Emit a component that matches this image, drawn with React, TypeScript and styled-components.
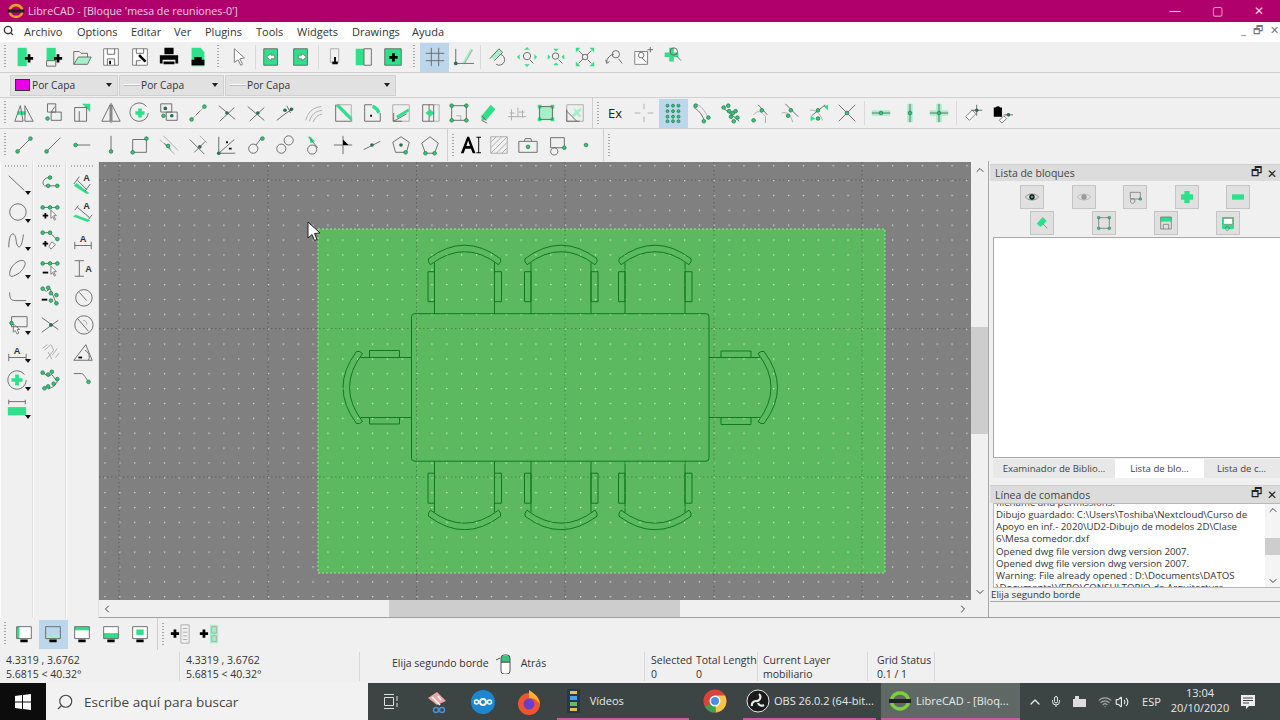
import React from "react";
import styled, { createGlobalStyle } from "styled-components";
import { ChevronUp, ChevronDown, ChevronLeft, ChevronRight, Mic, Wifi, Volume2, Search } from "lucide-react";

const UI = `"Open Sans", "Noto Sans", sans-serif`;
const NODE = "#37c27a";
const GREEN = "#2fe08a";

const Global = createGlobalStyle`
  html, body { margin: 0; padding: 0; background: #f0f0f0; overflow: hidden; }
  * { box-sizing: border-box; }
`;

// small description of a toolbar icon: b = white backing, s = stroke, l = light stroke, g = green fill, h = pale green, k = black fill, n = nodes
interface Glyph {
  b?: string;
  s?: string;
  l?: string;
  g?: string;
  h?: string;
  k?: string;
  w?: string;
  a?: string;
  n?: number[][];
  r?: number;
  dn?: number[][];
  text?: string;
  tx?: number;
  ty?: number;
}

const Icon: React.FC<{ glyph: Glyph; size?: number }> = ({ glyph, size = 22 }) => (
  <svg width={size} height={size} viewBox="0 0 24 24" fill="none">
    {glyph.b && <path d={glyph.b} fill="#fff" />}
    {glyph.h && <path d={glyph.h} fill="#a4f0c8" />}
    {glyph.g && <path d={glyph.g} fill={GREEN} />}
    {glyph.w && <path d={glyph.w} fill="#fff" stroke="#777" strokeWidth="1" />}
    {glyph.a && <path d={glyph.a} fill="#999" />}
    {glyph.l && <path d={glyph.l} stroke="#aaa" strokeWidth="1" />}
    {glyph.s && <path d={glyph.s} stroke="#666" strokeWidth="1" />}
    {glyph.k && <path d={glyph.k} fill="#000" />}
    {glyph.n?.map(([x, y], i) => (
      <circle key={i} cx={x} cy={y} r={glyph.r ?? 2} fill={NODE} stroke="#1f7d4c" strokeWidth="0.8" />
    ))}
    {glyph.dn?.map(([x, y], i) => (
      <circle key={i} cx={x} cy={y} r="2" fill="#2c6e4c" />
    ))}
    {glyph.text && (
      <text
        x={glyph.tx ?? 12}
        y={glyph.ty ?? 12}
        fontSize="10"
        fontWeight="700"
        textAnchor="middle"
        fill="#333"
        fontFamily="Liberation Sans, sans-serif"
      >
        {glyph.text}
      </text>
    )}
  </svg>
);

const PLUS = "M13 12h3V9h3v3h3v3h-3v3h-3v-3h-3z";
const DOC = "M5 2h10v20H5z";
const EYE = "M2 12c4-6 16-6 20 0c-4 6-16 6-20 0z";
const SCREEN = "M4 4h16v13H4z";
const STAND = "M8 18h8v3H8z";

const fileTools: Glyph[] = [
  { g: DOC, k: PLUS },
  { g: "M5 2h10v14H5z", s: "M5 16h10v6H5z", k: PLUS },
  { h: "M3 20l5-8h14l-4 8z", s: "M3 20V6h6l2 2h7v4 M3 20l5-8h14l-4 8z" },
  { w: "M4 3h16v18H4z", s: "M8 3v6h8V3 M8 21v-7h8v7", k: "M10 16h2v4h-2z" },
  { w: "M4 3h16v18H4z", s: "M8 3v5h8V3 M8 21v-5h5", k: "M12 9l7 7-2 2-7-7z" },
  { k: "M7 2h10v7H7z M2 10h20v9h-3v-4H5v4H2z M6 17h12v3H6z" },
  { g: "M5 2h10l4 5v15H5z", k: "M8 12h8v3h3v6H5v-6h3z" },
];
const selectTool: Glyph[] = [{ w: "M8 3v15l4-3 3 6 2-1-3-6 5-1z" }];
const blockPages: Glyph[] = [
  { g: "M3 3h15v18H3z", s: "M3 3h15v18H3z", w: "M6 12l5-4v2h4v4h-4v2z" },
  { g: "M4 3h15v18H4z", s: "M4 3h15v18H4z", w: "M18 12l-5-4v2H9v4h4v2z" },
];
const layers: Glyph[] = [
  { l: "M7 3h9v15H7z", k: "M11 12h2v6h-2z M9 17h6v3H9z" },
  { g: "M3 3h9v18H3z", s: "M12 3h8v18h-8z" },
  { g: "M3 3h18v18H3z", s: "M3 3h18v18H3z", k: "M8 11h3V8h3v3h3v3h-3v3h-3v-3H8z" },
];
const gridTools: Glyph[] = [
  { s: "M8 2v20 M16 2v20 M2 8h20 M2 16h20" },
  { l: "M12 20L21 4", h: "M11 17L19 3l3 2-8 13-3 2z", s: "M3 3v15 M3 19h20", dn: [[3, 19]] },
];
const zoomTools: Glyph[] = [
  { h: "M4 12L13 3l4 3-9 9z", s: "M3 14L13 3l4 4-9 9 M10 20a6 6 0 1 0 4-11" },
  { g: "M12 1l3 3H9z M12 23l3-3H9z M1 12l3-3v6z M23 12l-3-3v6z", s: "M15 15l4 4 M16 11a4 4 0 1 1-8 0a4 4 0 1 1 8 0" },
  { g: "M9 3h6l-3 3z M9 21h6l-3-3z M3 9v6l3-3z M21 9v6l-3-3z", s: "M15 15l4 4 M15 11a3.500 3.500 0 1 1-7 0a3.500 3.500 0 1 1 7 0" },
  { g: "M2 2h5L2 7z M22 2h-5l5 5z M2 22h5l-5-5z M22 22h-5l5-5z", s: "M5 5l5 5 M19 5l-5 5 M5 19l5-5 M15 15l4 4 M15 12a3 3 0 1 1-6 0a3 3 0 1 1 6 0" },
  { s: "M4 18a9 9 0 0 1 8-9 M3 15l1 4 3-2 M17 14l4 5 M18 9a4 4 0 1 1-8 0a4 4 0 1 1 8 0" },
  { w: "M3 6h14v14H3z", s: "M11 13l5 5 M13 10a3 3 0 1 1-6 0a3 3 0 1 1 6 0 M20 1v6 M17 4h6" },
  { g: "M9 2h5v5h5v5h-5v5H9v-5H4V7h5z", s: "M17 11l5 5 M18 6a4 4 0 1 1-8 0a4 4 0 1 1 8 0" },
];
const toolbar1 = { file: fileTools, select: selectTool, pages: blockPages, layers, grid: gridTools, zoom: zoomTools };

const modifyTools: Glyph[] = [
  { s: "M2 21L8 4l3 17z M13 4l9 17H13z", g: "M5 10h9v4H5z" },
  { s: "M6 2h9v9H6z M10 11h11v9H10z M14 5l-4 6", n: [[6, 18]] },
  { s: "M4 6h13v15H4z M9 10v11", g: "M12 2h9v9z" },
  { s: "M11 3L2 21h9z M13 3l9 18h-9z M12 1v22" },
  { s: "M19 5a10 10 0 1 0 2 7", g: "M10 7h4v3h3v4h-3v3h-4v-3H7v-4h3z" },
  { s: "M3 2h12v9H3z M9 11h12v9H9z", dn: [[8, 7], [15, 15]], n: [[6, 15]] },
  { l: "M6 18L18 6", s: "M10 14l4-4", n: [[5, 19], [19, 5]] },
  { s: "M3 4l18 15 M4 21L20 6", dn: [[12, 12]] },
  { s: "M3 5l18 15 M5 21l16-15", dn: [[14, 12]] },
  { s: "M3 20l9-7 M14 4l4 8 M12 13l9-6", dn: [[12, 9], [19, 8]] },
  { l: "M3 20C5 12 10 6 20 5 M7 21C9 14 13 10 21 9 M11 22c2-5 5-8 10-9" },
  { s: "M4 21V3 M4 21h17", l: "M4 3h17v18", g: "M7 2l15 15v5L4 4z" },
  { s: "M4 21V3h8 M4 21h17V12", g: "M13 3c4 1 7 4 8 8l-3 2c-1-3-3-5-6-7z", k: "M10 14h2v2h-2z" },
  { l: "M3 3h18v18H3z", s: "M4 21l14-8 M4 12v9h9", g: "M7 15l13-8 1 3-13 8z" },
  { s: "M4 3h12v18H4z M11 3v6 M11 15v6", l: "M16 3h6v18h-6", g: "M7 12l5-4 5 4-5 4z" },
  { s: "M4 4h16v16H4z", n: [[4, 4], [20, 4], [4, 20], [20, 20]], l: "M9 15h5v5" },
  { g: "M5 15L15 3l5 5-10 12H5z", s: "M5 15l5 5 M5 20l6 3" },
  { l: "M2 16h20 M6 8v12 M13 6v10 M18 9v8 M4 12h5 M14 11h6" },
  { h: "M4 4h16v16H4z", g: "M3 3h4v4H3z M17 3h4v4h-4z M3 17h4v4H3z M17 17h4v4h-4z", s: "M5 5h14v14H5z" },
  { l: "M3 3h18v18H3z", s: "M3 21V8 M3 21h14 M3 10l11 11", h: "M10 6l4 3 4-3 1 3-3 3 3 3-2 2-3-3-4 3-1-3 3-3z" },
];
const snapTools: Glyph[] = [
  { l: "M12 2v6 M12 16v6 M2 12h6 M16 12h6" },
  { r: 1.6, n: [[6, 4], [12, 4], [18, 4], [6, 10], [12, 10], [18, 10], [6, 16], [12, 16], [18, 16], [6, 21], [12, 21], [18, 21]] },
  { s: "M3 6c5 3 8 6 11 13", l: "M6 2c5 3 9 7 12 14", n: [[5, 4], [14, 21], [19, 17]] },
  { s: "M3 6l18 15", n: [[4, 6], [9, 4], [10, 10], [14, 12], [17, 10], [12, 16], [19, 17], [15, 21]] },
  { l: "M5 14c4-5 8-5 13 2v7", s: "M10 3l10 11", n: [[14, 9], [5, 20]] },
  { l: "M4 12c6-2 10 2 12 10", s: "M8 2l14 14", n: [[14, 9], [11, 15]] },
  { l: "M3 9c6-1 11 3 14 11", s: "M5 15L20 3", n: [[12, 9], [12, 18]], g: "M18 5l5-2v6z M4 15l5 3-5 3z" },
  { s: "M3 3l18 18 M21 3L3 21", n: [[12, 12]] },
];
const restrictTools: Glyph[] = [
  { h: "M2 9h20v6H2z", s: "M2 12h20", n: [[12, 12]] },
  { h: "M9 2h6v20H9z", s: "M12 2v20", n: [[12, 12]] },
  { h: "M9 2h6v7h7v6h-7v7H9v-7H2V9h7z", s: "M12 2v20 M2 12h20", n: [[12, 12]] },
];
const relTools: Glyph[] = [
  { w: "M4 16l7-7 4 4-7 7z", dn: [[16, 9]], s: "M16 3v12 M10 9h12" },
  { k: "M3 6h9v10H3z M5 6a3 3 0 0 1 5 0", w: "M9 20l5-5 3 3-5 5z", dn: [[19, 14]], s: "M14 14h10" },
];
const drawTools: Glyph[] = [
  { s: "M5 19L19 5", n: [[5, 19], [19, 5]] },
  { s: "M5 19L20 4", n: [[5, 19]] },
  { s: "M5 12h16", n: [[5, 12]] },
  { s: "M12 2v17", n: [[12, 19]] },
  { s: "M4 6h15v14H4z", n: [[4, 20], [19, 5]] },
  { l: "M6 2l16 16 M2 6l16 16", s: "M7 10l7 7", n: [[11, 13]] },
  { s: "M3 6l16 16 M8 20L20 8", l: "M14 2l8 8", dn: [[14, 14]] },
  { s: "M3 3v18h18 M3 21L20 6", dn: [[3, 21]], k: "M11 8h2v2h-2z M14 15h3v2h-3z" },
  { s: "M4 16a5 5 0 1 0 10 0a5 5 0 1 0-10 0 M12 12l7-9", n: [[19, 5]] },
  { s: "M3 16a5 5 0 1 0 10 0a5 5 0 1 0-10 0 M11 7a5 5 0 1 0 10 0a5 5 0 1 0-10 0" },
  { s: "M5 17a5 5 0 1 0 10 0a5 5 0 1 0-10 0 M6 3l10 12", g: "M7 2l6 6-5 2z" },
  { s: "M12 2v20 M2 12h20", k: "M12 6l6 6h-6z" },
  { s: "M3 17l18-9", dn: [[12, 12]] },
  { s: "M12 3l9 6-3 11H6L3 9z", n: [[17, 20]], dn: [[12, 12]] },
  { s: "M12 3l9 7-4 11H7L3 10z", n: [[7, 21], [17, 21]] },
];
const textTools: Glyph[] = [
  { k: "M2 21L9 3h2l7 18h-3l-2-5H7l-2 5z M8 13h4l-2-6z M19 3h5v1h-2v16h2v1h-5v-1h2V4h-2z" },
  { l: "M3 3h18v18H3z M3 9l6-6 M3 15L15 3 M3 21L21 3 M9 21L21 9 M15 21l6-6" },
  { s: "M2 8h20v12H2z M8 8l1-3h6l1 3", n: [[12, 14]] },
  { s: "M5 4h15v11H5z M5 19a4 4 0 1 0 0-.1", n: [[20, 15]] },
  { n: [[12, 12]] },
];

const col1: Glyph[] = [
  { s: "M3 3l17 16" },
  { s: "M4 12a9 9 0 1 0 18 0a9 9 0 1 0-18 0" },
  { s: "M3 20C3 2 10 2 11 12s6 12 8-6" },
  { s: "M4 18C4 10 14 2 19 4S18 16 12 19 4 22 4 18z" },
  { s: "M4 8c0 6 1 9 6 9h12" },
  { s: "M6 4h17v11H6z", n: [[6, 11]], w: "M8 12v9l2-2 2 4 2-1-2-4h3z" },
  { s: "M3 14v8 M22 14v8 M3 18h19", text: "A", ty: 14 },
  { s: "M20 6a10 10 0 1 0 2 6", g: "M10 6h4v4h4v4h-4v4h-4v-4H6v-4h4z" },
  { s: "M3 3v5 M21 3v5 M3 5h18", g: "M2 11h20v9H2z" },
];
const col2: Glyph[] = [
  { s: "M10 5C4 6 3 12 6 14h14", n: [[12, 5], [10, 14], [20, 14]] },
  { s: "M3 7h18", n: [[4, 7], [12, 7], [20, 7]], k: "M4 15h2v-2h2v2h2v2H8v2H6v-2H4z", w: "M13 10v9l2-2 2 4 1-1-2-4h3z" },
  { s: "M4 4h8l8 8", n: [[4, 4], [12, 4], [20, 11]], k: "M4 15h2v-2h2v2h2v2H8v2H6v-2H4z", w: "M14 14l4 3-5 5-2-3z" },
  { s: "M3 7h18", n: [[4, 7], [12, 7], [20, 7]], k: "M4 16h6v2H4z", w: "M13 10v9l2-2 2 4 1-1-2-4h3z" },
  { s: "M4 4l4 3 4-3 4 9 3 8", n: [[4, 4], [10, 3], [13, 9], [19, 11], [13, 17], [19, 20]], k: "M3 15h6v2H3z" },
  { s: "M3 5l18 13 M3 21L21 8", dn: [[13, 13]] },
  { l: "M4 8l5-4 M6 10l7-6 3 6-8 10 M10 12l4 8 M14 16l6-8 M18 18l4-5" },
  { s: "M4 4l6 4 4-2 6 8-4 5-6 3", n: [[4, 4], [10, 6], [14, 3], [20, 11], [16, 16], [10, 19], [6, 21]] },
];
const col3: Glyph[] = [
  { s: "M2 12l6-8 M14 20l6-8 M6 8l10 10", g: "M2 14l3-3 14 11-3 1z", text: "A", tx: 16, ty: 9 },
  { s: "M3 10l4-5 M18 20l4-5 M6 7l13 11", g: "M1 17l3-2 16 6-3 2z", text: "A", tx: 16, ty: 9 },
  { s: "M3 14v8 M21 14v8 M3 18h18", text: "A", ty: 14 },
  { s: "M3 4h10 M3 21h10 M8 4v17", text: "A", tx: 18, ty: 16 },
  { s: "M4 14a9 9 0 1 0 18 0a9 9 0 1 0-18 0 M8 8l8 9" },
  { s: "M3 13a10 10 0 1 0 20 0a10 10 0 1 0-20 0 M6 6l12 14", l: "M12 8a4 4 0 0 1 4 5" },
  { s: "M2 21L15 4l7 17z M14 10a8 8 0 0 1 4 11", k: "M7 17h4v2H7z" },
  { s: "M2 5h8c3 0 5 5 8 9", n: [[18, 14]] },
];

const viewTools: Glyph[] = [
  { b: SCREEN, s: SCREEN, g: "M4 4h3v13H4z", k: STAND },
  { s: SCREEN, h: "M4 14h16v3H4z", k: STAND },
  { b: SCREEN, s: SCREEN, g: "M4 4h16v4H4z", k: STAND },
  { b: SCREEN, s: SCREEN, g: "M4 11h16v6H4z", k: STAND },
  { b: SCREEN, s: SCREEN, g: "M8 7h8v6H8z", k: STAND },
];
const penTools: Glyph[] = [
  { k: "M2 10h3V7h3v3h3v3H8v3H5v-3H2z", l: "M13 2h9v20h-9z M15 6h5 M15 10h5 M15 14h5 M15 18h5" },
  { k: "M2 10h3V7h3v3h3v3H8v3H5v-3H2z", h: "M13 2h9v20h-9z", l: "M15 4h5v7h-5z M15 14h5v6h-5z" },
];

const TitleBar = styled.div`
  height: 22px;
  background: #b0006b;
  border-bottom: 1px solid #7d1a5a;
  display: flex;
  align-items: center;
  padding-left: 7px;
  color: #f0cfe2;
  font: 10.7px ${UI};
`;
const TitleText = styled.span`
  margin-left: 3px;
  flex: 1;
`;
const WinButton = styled.div`
  width: 42px;
  display: flex;
  justify-content: center;
  font-size: 12px;
  color: #f5c8e2;
`;
const MenuBar = styled.div`
  height: 20px;
  background: #fff;
  display: flex;
  align-items: center;
  padding: 0 0 2px 3px;
  font: 11px ${UI};
  color: #333;
`;
const MenuItem = styled.span<{ $w: number }>`
  width: ${(p) => p.$w}px;
`;
const MdiButtons = styled.div`
  margin-left: auto;
  display: flex;
  gap: 7px;
  color: #777;
  font-size: 11px;
  padding-right: 1px;
`;
const ToolRow = styled.div<{ $h: number; $line?: boolean }>`
  height: ${(p) => p.$h}px;
  display: flex;
  align-items: center;
  background: #f0f0f0;
  border-bottom: ${(p) => (p.$line ? "1px solid #cfcfcf" : "none")};
`;
const ToolButton = styled.div<{ $active?: boolean }>`
  width: 29px;
  height: 29px;
  flex: none;
  display: flex;
  align-items: center;
  justify-content: center;
  background: ${(p) => (p.$active ? "#bcd6ec" : "transparent")};
  font: 13px ${UI};
  color: #222;
`;
const Grip = styled.div<{ $w: number }>`
  width: ${(p) => p.$w}px;
  height: 24px;
  flex: none;
  background: repeating-linear-gradient(to bottom, #a8a8a8 0 1px, transparent 1px 3px) center / 2px 100% no-repeat;
`;
const Sep = styled.div<{ $w: number }>`
  width: ${(p) => p.$w}px;
  height: 24px;
  flex: none;
  background: linear-gradient(#dadada, #dadada) center / 1px 100% no-repeat;
`;
const Boundary = styled.div`
  width: 11px;
  height: 100%;
  flex: none;
  margin-left: 2px;
  margin-right: -2px;
  border-left: 1px solid #cfcfcf;
  background: repeating-linear-gradient(to bottom, #a8a8a8 0 1px, transparent 1px 3px) 4px center / 2px 22px no-repeat;
`;
const ComboRow = styled(ToolRow)`
  padding-left: 10px;
`;
const Combo = styled.div<{ $w: number }>`
  width: ${(p) => p.$w}px;
  height: 21px;
  margin-right: 1px;
  background: #e1e1e1;
  border: 1px solid #d0d0d0;
  display: flex;
  align-items: center;
  padding: 0 5px 0 4px;
  font: 10.2px ${UI};
  color: #333;
`;
const ColorSwatch = styled.div`
  width: 15px;
  height: 12px;
  background: #ea00e6;
  border: 1px solid #333;
  margin-right: 2px;
`;
const LineSwatch = styled.div`
  width: 16px;
  height: 2px;
  background: #fff;
  border-bottom: 1px solid #bbb;
  margin-right: 1px;
`;
const ComboArrow = styled.div`
  margin-left: auto;
  border-left: 3px solid transparent;
  border-right: 3px solid transparent;
  border-top: 4px solid #222;
`;
const Main = styled.div`
  height: 457px;
  display: flex;
`;
const ToolColumns = styled.div`
  width: 99px;
  flex: none;
  display: flex;
  background: #f0f0f0;
`;
const ToolColumn = styled.div`
  width: 33px;
  border-right: 1px solid #dfdfdf;
  border-left: 1px solid #fbfbfb;
  display: flex;
  flex-direction: column;
  align-items: center;
  padding-top: 4px;
`;
const ColGrip = styled.div`
  width: 24px;
  height: 2px;
  flex: none;
  margin-bottom: 3px;
  background: repeating-linear-gradient(to right, #b0b0b0 0 1px, transparent 1px 3px);
`;
const ColButton = styled.div<{ $more?: boolean }>`
  width: 28px;
  height: 28px;
  flex: none;
  position: relative;
  display: flex;
  align-items: center;
  justify-content: center;
  &::after {
    content: "";
    display: ${(p) => (p.$more ? "block" : "none")};
    position: absolute;
    right: 0;
    bottom: 3px;
    border-left: 3px solid transparent;
    border-right: 3px solid transparent;
    border-top: 4px solid #111;
  }
`;
const CanvasArea = styled.div`
  width: 889px;
  flex: none;
  display: grid;
  grid-template-columns: 872px 17px;
  grid-template-rows: 1px 438px 17px 1px;
  background: #f0f0f0;
`;
const TopEdge = styled.div`
  grid-column: 1 / 3;
`;
const BottomEdge = styled.div`
  grid-column: 1 / 3;
  background: #a0a0a0;
`;
const CanvasSvg = styled.svg`
  display: block;
  background: #808080;
`;
const VScroll = styled.div`
  display: flex;
  flex-direction: column;
  align-items: center;
  color: #444;
  padding: 2px 0;
`;
const VThumb = styled.div<{ $h: number; $after: number }>`
  width: 100%;
  height: ${(p) => p.$h}px;
  margin-top: auto;
  margin-bottom: ${(p) => p.$after}px;
  background: #cdcdcd;
`;
const HScroll = styled.div`
  display: flex;
  align-items: center;
  color: #444;
  padding: 0 2px;
`;
const HThumb = styled.div`
  width: 291px;
  height: 100%;
  margin-left: 276px;
  margin-right: auto;
  background: #cdcdcd;
`;
const ScrollCorner = styled.div`
  background: #f0f0f0;
`;
const Dock = styled.div`
  flex: 1;
  min-width: 0;
  display: flex;
  flex-direction: column;
  border-left: 1px solid #a8a8a8;
  border-bottom: 1px solid #a0a0a0;
  padding-left: 1px;
  padding-top: 3px;
  background: #f0f0f0;
  font: 10.5px ${UI};
  color: #333;
`;
const DockTitle = styled.div<{ $h: number }>`
  height: ${(p) => p.$h}px;
  flex: none;
  background: #dcdcdc;
  border-top: 1px solid #cfcfcf;
  display: flex;
  align-items: center;
  padding-left: 5px;
  color: #444;
`;
const DockActions = styled.div`
  margin-left: auto;
  display: flex;
  align-items: center;
  gap: 5px;
  padding-right: 3px;
  color: #222;
  font-size: 12px;
`;
const DockButtons = styled.div<{ $gap: number; $top: number }>`
  display: flex;
  justify-content: center;
  gap: ${(p) => p.$gap}px;
  margin-top: ${(p) => p.$top}px;
`;
const DockButton = styled.div`
  width: 24px;
  height: 24px;
  background: #e0e0e0;
  border: 1px solid #c4c4c4;
  display: flex;
  align-items: center;
  justify-content: center;
`;
const BlockList = styled.div`
  height: 221px;
  flex: none;
  margin: 2px 0 1px 3px;
  background: #fff;
  border: 1px solid #a8a8a8;
  border-right: none;
`;
const Tabs = styled.div`
  height: 19px;
  flex: none;
  display: flex;
  margin-left: 3px;
  margin-bottom: 7px;
  background: #e8e8e8;
  font-size: 9.6px;
`;
const Tab = styled.div<{ $w: number; $active?: boolean }>`
  width: ${(p) => p.$w}px;
  background: ${(p) => (p.$active ? "#fff" : "transparent")};
  display: flex;
  align-items: center;
  justify-content: center;
  color: #444;
`;
const CmdPane = styled.div`
  height: 85px;
  flex: none;
  display: flex;
  margin-left: 3px;
  border: 1px solid #b8b8b8;
  border-right: none;
  background: #fff;
`;
const CmdText = styled.div`
  flex: 1;
  min-width: 0;
  overflow: hidden;
  display: flex;
  flex-direction: column;
  justify-content: center;
  padding-left: 2px;
  font-size: 9.7px;
  line-height: 12.25px;
  white-space: nowrap;
`;
const CmdScroll = styled.div`
  width: 15px;
  flex: none;
  display: flex;
  flex-direction: column;
  align-items: center;
  background: #f4f4f4;
  color: #444;
`;
const CmdInput = styled.div`
  height: 13px;
  flex: none;
  margin-top: 1px;
  padding-left: 1px;
  font-size: 9.7px;
  line-height: 12px;
  border-bottom: 1px solid #a8a8a8;
`;
const StatusBar = styled.div`
  height: 33px;
  display: flex;
  background: #f0f0f0;
  font: 10.5px/14px ${UI};
  color: #333;
`;
const StatusBlock = styled.div<{ $w: number; $pad: number }>`
  width: ${(p) => p.$w}px;
  flex: none;
  padding: 1px 0 0 ${(p) => p.$pad}px;
  margin: 2px 0;
  border-right: 1px solid #d8d8d8;
`;
const StatusInline = styled(StatusBlock)`
  display: flex;
  align-items: center;
  gap: 6px;
  padding-bottom: 9px;
`;
const StatusPair = styled.div`
  display: flex;
  gap: 1px;
`;
const StatusCell = styled.div<{ $w?: number }>`
  width: ${(p) => (p.$w ? `${p.$w}px` : "auto")};
  white-space: nowrap;
`;
const Taskbar = styled.div`
  height: 37px;
  display: flex;
  background: #3c4543;
  color: #e8e8e8;
  font: 11px ${UI};
`;
const StartButton = styled.div`
  width: 46px;
  background: #0c0c0c;
  display: flex;
  align-items: center;
  justify-content: center;
`;
const SearchBox = styled.div`
  width: 322px;
  background: #f2f2f2;
  display: flex;
  align-items: center;
  padding-left: 10px;
  gap: 10px;
  color: #444;
  font-size: 13.5px;
`;
const TaskIcon = styled.div`
  width: 46px;
  display: flex;
  align-items: center;
  justify-content: center;
`;
const TaskApp = styled.div<{ $w: number; $ml: number; $pad: number; $open?: boolean; $active?: boolean }>`
  width: ${(p) => p.$w}px;
  margin-left: ${(p) => p.$ml}px;
  padding-left: ${(p) => p.$pad}px;
  display: flex;
  align-items: center;
  gap: 4px;
  white-space: nowrap;
  background: ${(p) => (p.$active ? "#5f6865" : "transparent")};
  border-bottom: 2px solid ${(p) => (p.$open ? "#c95aa5" : "transparent")};
`;
const Tray = styled.div<{ $w: number }>`
  width: ${(p) => p.$w}px;
  flex: none;
  display: flex;
  align-items: center;
  justify-content: center;
  text-align: center;
`;
const Clock = styled(Tray)`
  line-height: 15px;
  padding-bottom: 4px;
`;

const WindowsLogo = () => (
  <svg width="16" height="16" viewBox="0 0 16 16" fill="#fff">
    <path d="M0 2l7-1v6.500H0z M8 1l8-1v7.500H8z M0 8.500h7V15l-7-1z M8 8.500h8V16l-8-1z" />
  </svg>
);
const AppLogo: React.FC<{ size: number; ring: string }> = ({ size, ring }) => (
  <svg width={size} height={size} viewBox="0 0 24 24" fill="none">
    <path d="M4 9a9 9 0 0 1 16 0 M20 15a9 9 0 0 1-16 0" stroke={ring} strokeWidth="3.500" strokeLinecap="round" />
    <path d="M1 12h22" stroke="#222" strokeWidth="4" />
  </svg>
);
const TaskView = () => (
  <svg width="17" height="17" viewBox="0 0 17 17" fill="none" stroke="#ddd">
    <path d="M1.500 4.500h9v8h-9z M1 1.500h10 M1 15.500h10 M14 3v5 M14 10v4" />
  </svg>
);
const Snip = () => (
  <svg width="26" height="26" viewBox="0 0 26 26">
    <path d="M4 9l9-6 9 9-9 4z" fill="#e9a7a3" />
    <path d="M8 8l8 8 M14 7l3 4" stroke="#fff" strokeWidth="1.500" />
    <circle cx="18" cy="21" r="2.500" fill="none" stroke="#4a8fd0" strokeWidth="1.500" />
    <circle cx="12" cy="21" r="2.500" fill="none" stroke="#4a8fd0" strokeWidth="1.500" />
  </svg>
);
const Nextcloud = () => (
  <svg width="24" height="24" viewBox="0 0 24 24" fill="none">
    <circle cx="12" cy="12" r="12" fill="#1d86d0" />
    <circle cx="12" cy="12" r="3" stroke="#fff" strokeWidth="1.800" />
    <circle cx="5.500" cy="12" r="2" stroke="#fff" strokeWidth="1.500" />
    <circle cx="18.500" cy="12" r="2" stroke="#fff" strokeWidth="1.500" />
  </svg>
);
const Firefox = () => (
  <svg width="24" height="26" viewBox="0 0 24 26">
    <circle cx="12" cy="15" r="11" fill="#f0552e" />
    <path d="M12 1c5 3 10 7 11 14-3-4-6-6-11-6z" fill="#ffb02e" />
    <circle cx="12" cy="15" r="5.500" fill="#6a3fc8" />
  </svg>
);
const Film = () => (
  <svg width="13" height="24" viewBox="0 0 13 24">
    <path d="M0 0h13v24H0z" fill="#2a3550" />
    <path d="M3 2h7v3H3z" fill="#e6c04a" />
    <path d="M3 7h7v4H3z" fill="#4aa0e6" />
    <path d="M3 13h7v4H3z" fill="#66bb6a" />
    <path d="M3 19h7v3H3z" fill="#e6c04a" />
  </svg>
);
const Chrome = () => (
  <svg width="24" height="26" viewBox="0 0 24 24">
    <circle cx="12" cy="12" r="11.500" fill="#d9443a" />
    <path d="M12 12L2 18a11.500 11.500 0 0 0 11 5.500z" fill="#3da04f" />
    <path d="M12 12l1 11.500A11.500 11.500 0 0 0 22 6.500H12z" fill="#f6c544" />
    <circle cx="12" cy="12" r="5.500" fill="#fff" />
    <circle cx="12" cy="12" r="4" fill="#4a90e2" />
  </svg>
);
const Obs = () => (
  <svg width="24" height="24" viewBox="0 0 24 24" fill="none">
    <circle cx="12" cy="12" r="11" fill="#1a1a1a" stroke="#e8e8e8" />
    <path d="M13 5a4 4 0 0 1-3 7 M6 17a4 4 0 0 1 4-5 M18 16a4 4 0 0 1-6-2" stroke="#e8e8e8" strokeWidth="2.200" />
  </svg>
);
const MouseIcon = () => (
  <svg width="20" height="22" viewBox="0 0 20 22" fill="none" stroke="#555">
    <path d="M6 10h9v9a3 3 0 0 1-3 3H9a3 3 0 0 1-3-3z" fill="#fff" />
    <path d="M6 4h9v6H6z" fill={NODE} stroke="none" />
    <path d="M6 10V6a3 3 0 0 1 3-3h3a3 3 0 0 1 3 3v4z M1 8l4-2" />
  </svg>
);

const Chair: React.FC<{ transform: string }> = ({ transform }) => (
  <g transform={transform}>
    <path d="M-30 0V-51 M30 0V-51" />
    <path d="M-36.500-42h6.500v30h-6.500z M30-42h7v30h-7z" />
    <path d="M-36-55Q0-82 36-55Q37-52 34-49Q0-75-34-49Q-37-52-36-55z" />
  </g>
);

const CadCanvas = () => {
  const majorX = [119, 268, 416.5, 565, 714, 862];
  const majorY = [180, 328.6, 477];
  return (
    <CanvasSvg width="872" height="438" viewBox="99 162 872 438">
      <defs>
        <pattern id="dots" x="312.5" y="224.6" width="14.86" height="14.86" patternUnits="userSpaceOnUse">
          <rect width="1.2" height="1.2" fill="#fff" opacity="0.8" />
        </pattern>
      </defs>
      <rect x="318" y="229" width="567" height="344" fill="#5db960" stroke="#8df08f" strokeDasharray="2 2" />
      <rect x="99" y="162" width="872" height="438" fill="url(#dots)" />
      <g stroke="rgba(20,40,20,0.32)" strokeDasharray="1.500 2.500">
        {majorX.map((x) => (
          <line key={x} x1={x} y1="162" x2={x} y2="600" />
        ))}
        {majorY.map((y) => (
          <line key={y} x1="99" y1={y} x2="971" y2={y} />
        ))}
      </g>
      <g fill="none" stroke="#0e7a1e" strokeWidth="1">
        <rect x="411.500" y="313.700" width="297.500" height="147.500" rx="3" />
        <Chair transform="translate(464.500 313.700)" />
        <Chair transform="translate(561 313.700)" />
        <Chair transform="translate(655 313.700)" />
        <Chair transform="translate(464.500 461.200) scale(1 -1)" />
        <Chair transform="translate(561 461.200) scale(1 -1)" />
        <Chair transform="translate(655 461.200) scale(1 -1)" />
        <Chair transform="translate(411.500 387.500) rotate(-90)" />
        <Chair transform="translate(709 387.500) rotate(90)" />
      </g>
      <path d="M308 222v16l4-3.500 2.500 6 2.500-1-2.500-6 5.500-.5z" fill="#fff" stroke="#222" strokeWidth="1" />
    </CanvasSvg>
  );
};

const Buttons: React.FC<{ glyphs: Glyph[]; active?: number }> = ({ glyphs, active }) => (
  <>
    {glyphs.map((g, i) => (
      <ToolButton key={i} $active={i === active}>
        <Icon glyph={g} />
      </ToolButton>
    ))}
  </>
);

const Column: React.FC<{ glyphs: Glyph[]; more?: boolean }> = ({ glyphs, more }) => (
  <ToolColumn>
    <ColGrip />
    {glyphs.map((g, i) => (
      <ColButton key={i} $more={more}>
        <Icon glyph={g} />
      </ColButton>
    ))}
  </ToolColumn>
);

const commandLines = [
  "filename and permissions.",
  "Dibujo guardado: C:\\Users\\Toshiba\\Nextcloud\\Curso de",
  "Apoyo en inf.- 2020\\UD2-Dibujo de modelos 2D\\Clase",
  "6\\Mesa comedor.dxf",
  "Opened dwg file version dwg version 2007.",
  "Opened dwg file version dwg version 2007.",
  "Warning: File already opened : D:\\Documents\\DATOS",
  "\\Documents\\VERO\\CONSULTORIO de Arquitectura",
];

const menus: [string, number][] = [
  ["Archivo", 53],
  ["Options", 54],
  ["Editar", 43],
  ["Ver", 31],
  ["Plugins", 51],
  ["Tools", 41],
  ["Widgets", 55],
  ["Drawings", 60],
  ["Ayuda", 50],
];

const dockRow1: Glyph[] = [
  { s: EYE, k: "M8 12a4 4 0 1 0 8 0a4 4 0 1 0-8 0z", n: [[12, 12]] },
  { l: EYE, a: "M8 12a4 4 0 1 0 8 0a4 4 0 1 0-8 0z" },
  { s: "M5 5h15v10H5z M5 18a3.500 3.500 0 1 0 0-.1", n: [[20, 15]] },
  { g: "M8 3h8v5h5v8h-5v5H8v-5H3V8h5z" },
  { g: "M3 8h18v8H3z" },
];
const dockRow2: Glyph[] = [
  { g: "M4 13L13 3l6 6-9 9z", s: "M13 13l7 7" },
  { s: "M4 4h16v16H4z", n: [[4, 4], [20, 4], [4, 20], [20, 20]] },
  { g: "M4 3h16v7H4z", s: "M4 3h16v18H4z M8 21v-7h8v7" },
  { g: "M3 3h18v18H3z", w: "M5 5h14v9H5z", s: "M8 20a3 3 0 1 0 0-.1" },
];

export default function App() {
  return (
    <>
      <Global />
      <TitleBar>
        <AppLogo size={18} ring="#e0a02a" />
        <TitleText>LibreCAD - [Bloque 'mesa de reuniones-0']</TitleText>
        <WinButton>—</WinButton>
        <WinButton>▢</WinButton>
        <WinButton>✕</WinButton>
      </TitleBar>
      <MenuBar>
        <MenuItem $w={21}>
          <Search size={11} strokeWidth={3} />
        </MenuItem>
        {menus.map(([label, w]) => (
          <MenuItem key={label} $w={w}>
            {label}
          </MenuItem>
        ))}
        <MdiButtons>
          <span>_</span>
          <span>🗗</span>
          <span>✕</span>
        </MdiButtons>
      </MenuBar>
      <ToolRow $h={31} $line>
        <Grip $w={9.5} />
        <Buttons glyphs={toolbar1.file} />
        <Grip $w={11} />
        <Buttons glyphs={toolbar1.select} />
        <Sep $w={5} />
        <Buttons glyphs={toolbar1.pages} />
        <Sep $w={5} />
        <Buttons glyphs={toolbar1.layers} />
        <Grip $w={12.5} />
        <Buttons glyphs={toolbar1.grid} active={0} />
        <Sep $w={5} />
        <Buttons glyphs={toolbar1.zoom} />
      </ToolRow>
      <ComboRow $h={25} $line>
        <Combo $w={108}>
          <ColorSwatch />
          Por Capa
          <ComboArrow />
        </Combo>
        <Combo $w={105}>
          <LineSwatch />
          Por Capa
          <ComboArrow />
        </Combo>
        <Combo $w={171}>
          <LineSwatch />
          Por Capa
          <ComboArrow />
        </Combo>
      </ComboRow>
      <ToolRow $h={31} $line>
        <Grip $w={9.5} />
        <Buttons glyphs={modifyTools} />
        <Boundary />
        <ToolButton>Ex</ToolButton>
        <Buttons glyphs={snapTools} active={1} />
        <Sep $w={5} />
        <Buttons glyphs={restrictTools} />
        <Sep $w={5} />
        <Buttons glyphs={relTools} />
      </ToolRow>
      <ToolRow $h={32}>
        <Grip $w={9.5} />
        <Buttons glyphs={drawTools} />
        <Boundary />
        <Buttons glyphs={textTools} />
        <Boundary />
      </ToolRow>
      <Main>
        <ToolColumns>
          <Column glyphs={col1} more />
          <Column glyphs={col2} />
          <Column glyphs={col3} />
        </ToolColumns>
        <CanvasArea>
          <TopEdge />
          <CadCanvas />
          <VScroll>
            <ChevronUp size={12} />
            <VThumb $h={107} $after={152} />
            <ChevronDown size={12} />
          </VScroll>
          <HScroll>
            <ChevronLeft size={12} />
            <HThumb />
            <ChevronRight size={12} />
          </HScroll>
          <ScrollCorner />
          <BottomEdge />
        </CanvasArea>
        <Dock>
          <DockTitle $h={17}>
            Lista de bloques
            <DockActions>
              <span>🗗</span>
              <span>✕</span>
            </DockActions>
          </DockTitle>
          <DockButtons $gap={27.5} $top={4}>
            {dockRow1.map((g, i) => (
              <DockButton key={i}>
                <Icon glyph={g} size={16} />
              </DockButton>
            ))}
          </DockButtons>
          <DockButtons $gap={38} $top={2}>
            {dockRow2.map((g, i) => (
              <DockButton key={i}>
                <Icon glyph={g} size={16} />
              </DockButton>
            ))}
          </DockButtons>
          <BlockList />
          <Tabs>
            <Tab $w={122}>Examinador de Biblio...</Tab>
            <Tab $w={89} $active>
              Lista de blo...
            </Tab>
            <Tab $w={75}>Lista de c...</Tab>
          </Tabs>
          <DockTitle $h={18}>
            Línea de comandos
            <DockActions>
              <span>🗗</span>
              <span>✕</span>
            </DockActions>
          </DockTitle>
          <CmdPane>
            <CmdText>
              {commandLines.map((line, i) => (
                <div key={i}>{line}</div>
              ))}
            </CmdText>
            <CmdScroll>
              <ChevronUp size={12} />
              <VThumb $h={17} $after={20} />
              <ChevronDown size={12} />
            </CmdScroll>
          </CmdPane>
          <CmdInput>Elija segundo borde</CmdInput>
        </Dock>
      </Main>
      <ToolRow $h={32}>
        <Grip $w={9.5} />
        <Buttons glyphs={viewTools.slice(0, 1)} />
        <ToolButton $active>
          <Icon glyph={viewTools[1]} />
        </ToolButton>
        <Buttons glyphs={viewTools.slice(2)} />
        <Boundary />
        <Buttons glyphs={penTools} />
      </ToolRow>
      <StatusBar>
        <StatusBlock $w={180} $pad={6}>
          <div>4.3319 , 3.6762</div>
          <div>5.6815 &lt; 40.32°</div>
        </StatusBlock>
        <StatusBlock $w={180} $pad={6}>
          <div>4.3319 , 3.6762</div>
          <div>5.6815 &lt; 40.32°</div>
        </StatusBlock>
        <StatusInline $w={285} $pad={32}>
          Elija segundo borde
          <MouseIcon />
          Atrás
        </StatusInline>
        <StatusBlock $w={113} $pad={6}>
          <StatusPair>
            <StatusCell $w={44}>Selected</StatusCell>
            <StatusCell>Total Length</StatusCell>
          </StatusPair>
          <StatusPair>
            <StatusCell $w={44}>0</StatusCell>
            <StatusCell>0</StatusCell>
          </StatusPair>
        </StatusBlock>
        <StatusBlock $w={110} $pad={5}>
          <div>Current Layer</div>
          <div>mobiliario</div>
        </StatusBlock>
        <StatusBlock $w={67} $pad={9}>
          <div>Grid Status</div>
          <div>0.1 / 1</div>
        </StatusBlock>
      </StatusBar>
      <Taskbar>
        <StartButton>
          <WindowsLogo />
        </StartButton>
        <SearchBox>
          <Search size={18} strokeWidth={1.5} transform="scale(-1 1)" />
          Escribe aquí para buscar
        </SearchBox>
        <TaskIcon>
          <TaskView />
        </TaskIcon>
        <TaskIcon>
          <Snip />
        </TaskIcon>
        <TaskIcon>
          <Nextcloud />
        </TaskIcon>
        <TaskIcon>
          <Firefox />
        </TaskIcon>
        <TaskApp $w={132} $ml={5} $pad={10} $open>
          <Film />
          &nbsp;&nbsp;Vídeos
        </TaskApp>
        <TaskApp $w={43} $ml={5} $pad={9}>
          <Chrome />
        </TaskApp>
        <TaskApp $w={133} $ml={6} $pad={3} $open>
          <Obs />
          OBS 26.0.2 (64-bit...
        </TaskApp>
        <TaskApp $w={139} $ml={5} $pad={7} $open $active>
          <AppLogo size={24} ring="#7bd13a" />
          LibreCAD - [Bloq...
        </TaskApp>
        <Tray $w={30}>
          <ChevronUp size={16} />
        </Tray>
        <Tray $w={12}>
          <Mic size={15} />
        </Tray>
        <Tray $w={34}>
          <svg width="15" height="12" viewBox="0 0 15 12" fill="#ddd">
            <path d="M1 3h13v8H1z M3 0h4v3H3z" />
          </svg>
        </Tray>
        <Tray $w={17}>
          <Wifi size={14} color="#aaa" />
        </Tray>
        <Tray $w={18}>
          <Volume2 size={14} />
        </Tray>
        <Tray $w={41}>ESP</Tray>
        <Clock $w={56}>
          13:04
          <br />
          20/10/2020
        </Clock>
        <Tray $w={40}>
          <svg width="16" height="16" viewBox="0 0 16 16" fill="#eee">
            <path d="M1 1h14v11H9l-3 3v-3H1z" />
            <path d="M3 4h10M3 6.500h10M3 9h6" stroke="#3c4543" />
          </svg>
        </Tray>
      </Taskbar>
    </>
  );
}
